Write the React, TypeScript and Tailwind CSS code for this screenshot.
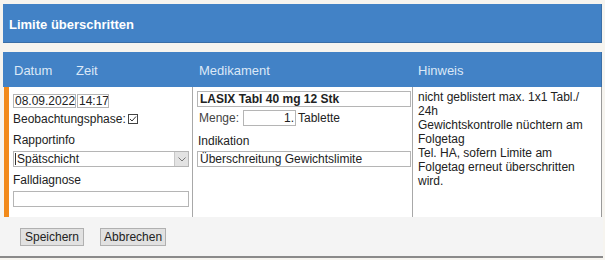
import { useState } from "react";

const font = { fontFamily: '"Liberation Sans", Arial, sans-serif' };

const App = () => {
  const [checked, setChecked] = useState(true);

  return (
    <div className="w-[605px] h-[260px] bg-[#f6f4ef] pt-[4px] text-[12px] text-[#222]" style={font}>
      {/* Title bar */}
      <div className="ml-[3px] w-[599px] h-[39px] bg-[#4282c6] border-b border-r border-[#3a6ea6] flex items-center pl-[6px] pt-[4px]">
        <span className="text-white font-bold text-[13px]">Limite überschritten</span>
      </div>

      <div className="h-[9px]" />

      {/* Column header */}
      <div className="ml-[3px] w-[599px] h-[35px] bg-[#4282c6] border-r border-[#3a6ea6] flex items-center pt-[3px] text-[13px] text-[#dbe8f7]">
        <div className="w-[190px] flex pl-[11px]">
          <span className="w-[62px]">Datum</span>
          <span>Zeit</span>
        </div>
        <div className="w-[220px] pl-[6px]">Medikament</div>
        <div className="pl-[5px]">Hinweis</div>
      </div>

      {/* Body */}
      <div className="ml-[4px] w-[598px] h-[130px] bg-white border-l-[5px] border-[#f28a1a] border-r border-r-[#9a9a9a] flex">
        {/* Column 1 */}
        <div className="w-[184px] border-r border-[#a8a8a8] pt-[7px] pl-[4px] pr-[4px] flex flex-col">
          <div className="flex gap-[1px]">
            <input
              readOnly
              value="08.09.2022"
              className="w-[63px] h-[14px] border border-[#b5b5b5] pl-[1px] pr-0 text-[12px] leading-none outline-none"
            />
            <input
              readOnly
              value="14:17"
              className="w-[32px] h-[14px] border border-[#b5b5b5] pl-[1px] pr-0 text-[12px] leading-none outline-none"
            />
          </div>
          <div className="flex items-center mt-[4px] h-[14px]">
            <span>Beobachtungsphase:</span>
            <span
              onClick={() => setChecked(!checked)}
              className="ml-[2px] w-[10px] h-[10px] border border-[#444] flex items-center justify-center"
            >
              {checked && (
                <svg width="8" height="8" viewBox="0 0 8 8">
                  <path d="M1 4 L3 6 L7 1.5" fill="none" stroke="#333" strokeWidth="1" />
                </svg>
              )}
            </span>
          </div>
          <div className="mt-[5px] h-[14px]">Rapportinfo</div>
          <div className="mt-[6px] w-[176px] h-[16px] border border-[#b5b5b5] flex items-center">
            <span className="flex-1 pl-[1px] border-l border-[#333] ml-[1px] leading-none">Spätschicht</span>
            <span className="w-[14px] h-[14px] bg-[#e3e3e3] border-l border-[#c8c8c8] flex items-center justify-center">
              <svg width="8" height="5" viewBox="0 0 8 5">
                <path d="M0.5 0.5 L4 4 L7.5 0.5" fill="none" stroke="#777" strokeWidth="1" />
              </svg>
            </span>
          </div>
          <div className="mt-[4px] h-[14px]">Falldiagnose</div>
          <div className="mt-[6px] w-[176px] h-[16px] border border-[#b5b5b5]" />
        </div>

        {/* Column 2 */}
        <div className="w-[220px] border-r border-[#a8a8a8] pt-[4px] pl-[4px] flex flex-col">
          <div className="w-[214px] h-[16px] border border-[#b5b5b5] flex items-center pl-[2px] font-bold text-[12px]">
            LASIX Tabl 40 mg 12 Stk
          </div>
          <div className="flex items-center mt-[3px] h-[16px]">
            <span className="w-[46px] pl-[2px] text-[#444]">Menge:</span>
            <span className="w-[53px] h-[16px] border border-[#b5b5b5] flex items-center justify-end pr-[1px]">1.</span>
            <span className="ml-[2px]">Tablette</span>
          </div>
          <div className="mt-[6px] h-[14px] pl-[1px]">Indikation</div>
          <div className="mt-[5px] w-[214px] h-[16px] border border-[#b5b5b5] flex items-center pl-[2px]">
            Überschreitung Gewichtslimite
          </div>
        </div>

        {/* Column 3 */}
        <div className="flex-1 pt-[3px] pl-[5px] pr-[6px] leading-[14px]">
          <div className="w-[175px]">nicht geblistert max. 1x1 Tabl./ 24h</div>
          <div className="w-[175px]">Gewichtskontrolle nüchtern am Folgetag</div>
          <div className="w-[175px]">Tel. HA, sofern Limite am Folgetag erneut überschritten wird.</div>
        </div>
      </div>

      {/* Footer */}
      <div className="w-[603px] h-[41px] bg-[#f4f4f4] border-b-[2px] border-[#8a8a8a] flex items-center pl-[20px] gap-[16px]">
        <button className="h-[18px] px-[4px] bg-[#e1e1e1] border border-[#b0b0b0] text-[12px] leading-none text-[#222]">
          Speichern
        </button>
        <button className="h-[18px] px-[3px] bg-[#e1e1e1] border border-[#b0b0b0] text-[12px] leading-none text-[#222]">
          Abbrechen
        </button>
      </div>
    </div>
  );
};

export default App;
